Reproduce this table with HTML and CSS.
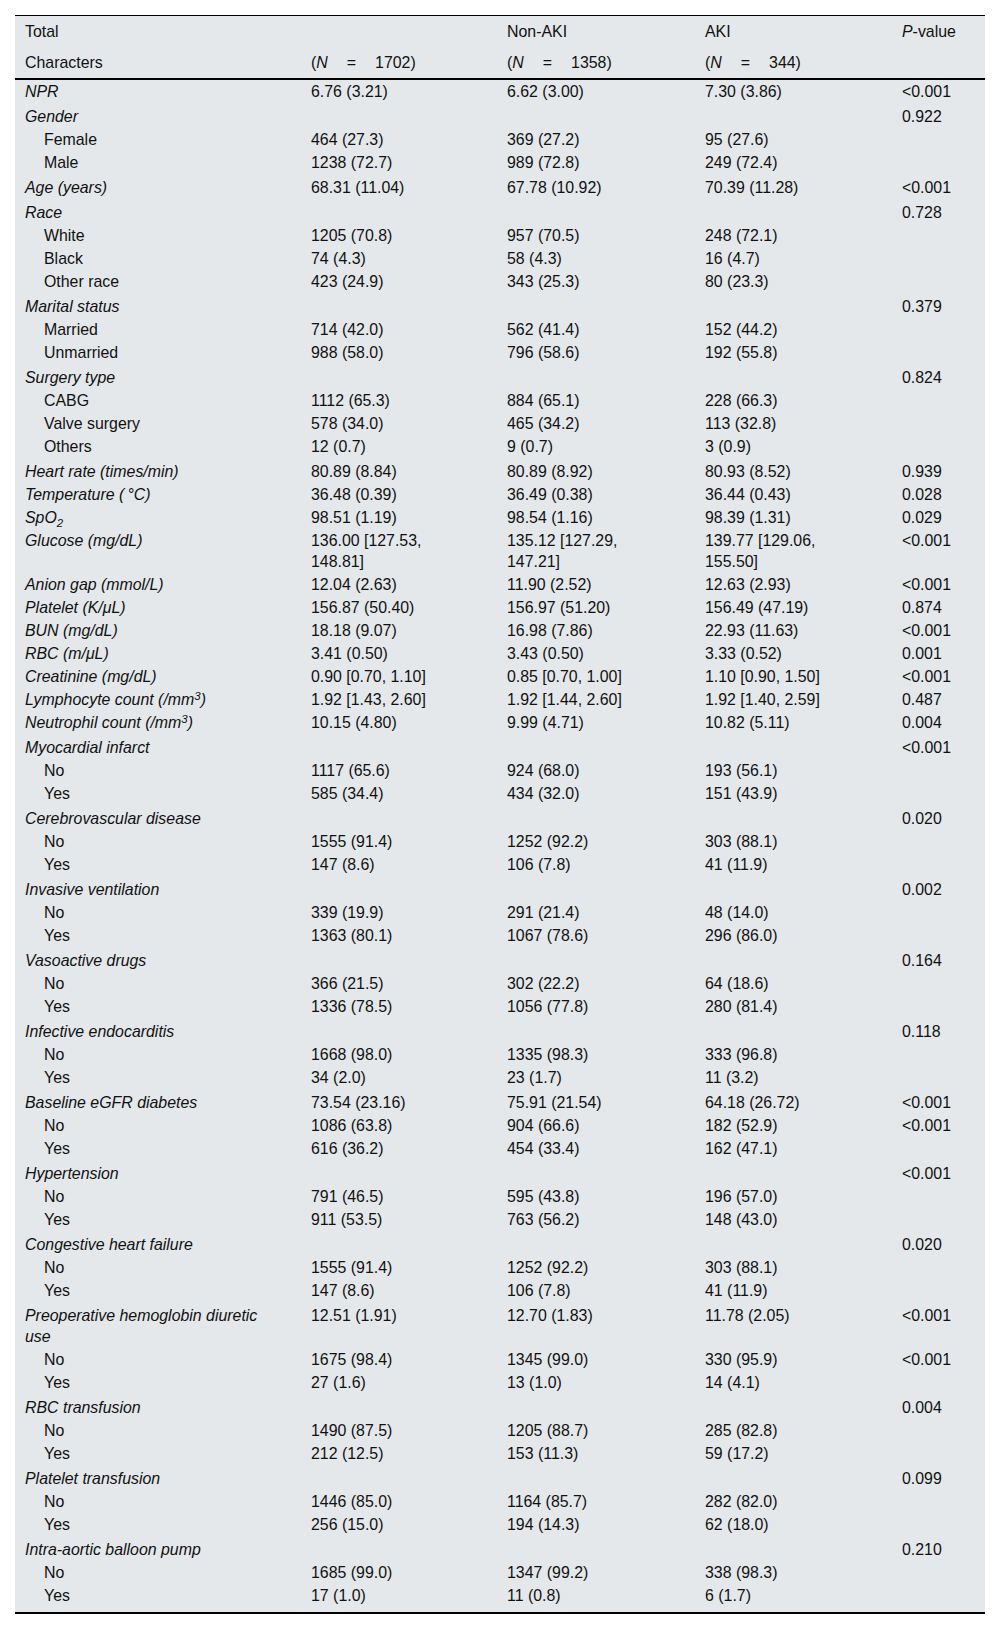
FILE: index.html
```html
<!DOCTYPE html>
<html>
<head>
<meta charset="utf-8">
<link rel="stylesheet" href="styles.css">
</head>
<body>
<div class="wrap">
<table class="data">
<colgroup><col class="c1"><col class="c2"><col class="c3"><col class="c4"><col class="c5"></colgroup>
<thead>
<tr class="h1"><th>Total</th><th></th><th>Non-AKI</th><th>AKI</th><th><i>P</i>-value</th></tr>
<tr class="h2"><th>Characters</th><th>(<i>N</i><span class="eq">=</span>1702)</th><th>(<i>N</i><span class="eq">=</span>1358)</th><th>(<i>N</i><span class="eq">=</span>344)</th><th></th></tr>
</thead>
<tbody>
<tr><td><i>NPR</i></td><td>6.76 (3.21)</td><td>6.62 (3.00)</td><td>7.30 (3.86)</td><td>&lt;0.001</td></tr>
<tr class="sep"><td><i>Gender</i></td><td></td><td></td><td></td><td>0.922</td></tr>
<tr class="sub"><td>Female</td><td>464 (27.3)</td><td>369 (27.2)</td><td>95 (27.6)</td><td></td></tr>
<tr class="sub"><td>Male</td><td>1238 (72.7)</td><td>989 (72.8)</td><td>249 (72.4)</td><td></td></tr>
<tr class="sep"><td><i>Age (years)</i></td><td>68.31 (11.04)</td><td>67.78 (10.92)</td><td>70.39 (11.28)</td><td>&lt;0.001</td></tr>
<tr class="sep"><td><i>Race</i></td><td></td><td></td><td></td><td>0.728</td></tr>
<tr class="sub"><td>White</td><td>1205 (70.8)</td><td>957 (70.5)</td><td>248 (72.1)</td><td></td></tr>
<tr class="sub"><td>Black</td><td>74 (4.3)</td><td>58 (4.3)</td><td>16 (4.7)</td><td></td></tr>
<tr class="sub"><td>Other race</td><td>423 (24.9)</td><td>343 (25.3)</td><td>80 (23.3)</td><td></td></tr>
<tr class="sep"><td><i>Marital status</i></td><td></td><td></td><td></td><td>0.379</td></tr>
<tr class="sub"><td>Married</td><td>714 (42.0)</td><td>562 (41.4)</td><td>152 (44.2)</td><td></td></tr>
<tr class="sub"><td>Unmarried</td><td>988 (58.0)</td><td>796 (58.6)</td><td>192 (55.8)</td><td></td></tr>
<tr class="sep"><td><i>Surgery type</i></td><td></td><td></td><td></td><td>0.824</td></tr>
<tr class="sub"><td>CABG</td><td>1112 (65.3)</td><td>884 (65.1)</td><td>228 (66.3)</td><td></td></tr>
<tr class="sub"><td>Valve surgery</td><td>578 (34.0)</td><td>465 (34.2)</td><td>113 (32.8)</td><td></td></tr>
<tr class="sub"><td>Others</td><td>12 (0.7)</td><td>9 (0.7)</td><td>3 (0.9)</td><td></td></tr>
<tr class="sep"><td><i>Heart rate (times/min)</i></td><td>80.89 (8.84)</td><td>80.89 (8.92)</td><td>80.93 (8.52)</td><td>0.939</td></tr>
<tr><td><i>Temperature (&#8201;°C)</i></td><td>36.48 (0.39)</td><td>36.49 (0.38)</td><td>36.44 (0.43)</td><td>0.028</td></tr>
<tr><td><i>SpO<sub>2</sub></i></td><td>98.51 (1.19)</td><td>98.54 (1.16)</td><td>98.39 (1.31)</td><td>0.029</td></tr>
<tr><td><i>Glucose (mg/dL)</i></td><td>136.00 [127.53, 148.81]</td><td>135.12 [127.29, 147.21]</td><td>139.77 [129.06, 155.50]</td><td>&lt;0.001</td></tr>
<tr><td><i>Anion gap (mmol/L)</i></td><td>12.04 (2.63)</td><td>11.90 (2.52)</td><td>12.63 (2.93)</td><td>&lt;0.001</td></tr>
<tr><td><i>Platelet (K/μL)</i></td><td>156.87 (50.40)</td><td>156.97 (51.20)</td><td>156.49 (47.19)</td><td>0.874</td></tr>
<tr><td><i>BUN (mg/dL)</i></td><td>18.18 (9.07)</td><td>16.98 (7.86)</td><td>22.93 (11.63)</td><td>&lt;0.001</td></tr>
<tr><td><i>RBC (m/μL)</i></td><td>3.41 (0.50)</td><td>3.43 (0.50)</td><td>3.33 (0.52)</td><td>0.001</td></tr>
<tr><td><i>Creatinine (mg/dL)</i></td><td>0.90 [0.70, 1.10]</td><td>0.85 [0.70, 1.00]</td><td>1.10 [0.90, 1.50]</td><td>&lt;0.001</td></tr>
<tr><td><i>Lymphocyte count (/mm<sup>3</sup>)</i></td><td>1.92 [1.43, 2.60]</td><td>1.92 [1.44, 2.60]</td><td>1.92 [1.40, 2.59]</td><td>0.487</td></tr>
<tr><td><i>Neutrophil count (/mm<sup>3</sup>)</i></td><td>10.15 (4.80)</td><td>9.99 (4.71)</td><td>10.82 (5.11)</td><td>0.004</td></tr>
<tr class="sep"><td><i>Myocardial infarct</i></td><td></td><td></td><td></td><td>&lt;0.001</td></tr>
<tr class="sub"><td>No</td><td>1117 (65.6)</td><td>924 (68.0)</td><td>193 (56.1)</td><td></td></tr>
<tr class="sub"><td>Yes</td><td>585 (34.4)</td><td>434 (32.0)</td><td>151 (43.9)</td><td></td></tr>
<tr class="sep"><td><i>Cerebrovascular disease</i></td><td></td><td></td><td></td><td>0.020</td></tr>
<tr class="sub"><td>No</td><td>1555 (91.4)</td><td>1252 (92.2)</td><td>303 (88.1)</td><td></td></tr>
<tr class="sub"><td>Yes</td><td>147 (8.6)</td><td>106 (7.8)</td><td>41 (11.9)</td><td></td></tr>
<tr class="sep"><td><i>Invasive ventilation</i></td><td></td><td></td><td></td><td>0.002</td></tr>
<tr class="sub"><td>No</td><td>339 (19.9)</td><td>291 (21.4)</td><td>48 (14.0)</td><td></td></tr>
<tr class="sub"><td>Yes</td><td>1363 (80.1)</td><td>1067 (78.6)</td><td>296 (86.0)</td><td></td></tr>
<tr class="sep"><td><i>Vasoactive drugs</i></td><td></td><td></td><td></td><td>0.164</td></tr>
<tr class="sub"><td>No</td><td>366 (21.5)</td><td>302 (22.2)</td><td>64 (18.6)</td><td></td></tr>
<tr class="sub"><td>Yes</td><td>1336 (78.5)</td><td>1056 (77.8)</td><td>280 (81.4)</td><td></td></tr>
<tr class="sep"><td><i>Infective endocarditis</i></td><td></td><td></td><td></td><td>0.118</td></tr>
<tr class="sub"><td>No</td><td>1668 (98.0)</td><td>1335 (98.3)</td><td>333 (96.8)</td><td></td></tr>
<tr class="sub"><td>Yes</td><td>34 (2.0)</td><td>23 (1.7)</td><td>11 (3.2)</td><td></td></tr>
<tr class="sep"><td><i>Baseline eGFR diabetes</i></td><td>73.54 (23.16)</td><td>75.91 (21.54)</td><td>64.18 (26.72)</td><td>&lt;0.001</td></tr>
<tr class="sub"><td>No</td><td>1086 (63.8)</td><td>904 (66.6)</td><td>182 (52.9)</td><td>&lt;0.001</td></tr>
<tr class="sub"><td>Yes</td><td>616 (36.2)</td><td>454 (33.4)</td><td>162 (47.1)</td><td></td></tr>
<tr class="sep"><td><i>Hypertension</i></td><td></td><td></td><td></td><td>&lt;0.001</td></tr>
<tr class="sub"><td>No</td><td>791 (46.5)</td><td>595 (43.8)</td><td>196 (57.0)</td><td></td></tr>
<tr class="sub"><td>Yes</td><td>911 (53.5)</td><td>763 (56.2)</td><td>148 (43.0)</td><td></td></tr>
<tr class="sep"><td><i>Congestive heart failure</i></td><td></td><td></td><td></td><td>0.020</td></tr>
<tr class="sub"><td>No</td><td>1555 (91.4)</td><td>1252 (92.2)</td><td>303 (88.1)</td><td></td></tr>
<tr class="sub"><td>Yes</td><td>147 (8.6)</td><td>106 (7.8)</td><td>41 (11.9)</td><td></td></tr>
<tr class="sep"><td><i>Preoperative hemoglobin diuretic use</i></td><td>12.51 (1.91)</td><td>12.70 (1.83)</td><td>11.78 (2.05)</td><td>&lt;0.001</td></tr>
<tr class="sub"><td>No</td><td>1675 (98.4)</td><td>1345 (99.0)</td><td>330 (95.9)</td><td>&lt;0.001</td></tr>
<tr class="sub"><td>Yes</td><td>27 (1.6)</td><td>13 (1.0)</td><td>14 (4.1)</td><td></td></tr>
<tr class="sep"><td><i>RBC transfusion</i></td><td></td><td></td><td></td><td>0.004</td></tr>
<tr class="sub"><td>No</td><td>1490 (87.5)</td><td>1205 (88.7)</td><td>285 (82.8)</td><td></td></tr>
<tr class="sub"><td>Yes</td><td>212 (12.5)</td><td>153 (11.3)</td><td>59 (17.2)</td><td></td></tr>
<tr class="sep"><td><i>Platelet transfusion</i></td><td></td><td></td><td></td><td>0.099</td></tr>
<tr class="sub"><td>No</td><td>1446 (85.0)</td><td>1164 (85.7)</td><td>282 (82.0)</td><td></td></tr>
<tr class="sub"><td>Yes</td><td>256 (15.0)</td><td>194 (14.3)</td><td>62 (18.0)</td><td></td></tr>
<tr class="sep"><td><i>Intra-aortic balloon pump</i></td><td></td><td></td><td></td><td>0.210</td></tr>
<tr class="sub"><td>No</td><td>1685 (99.0)</td><td>1347 (99.2)</td><td>338 (98.3)</td><td></td></tr>
<tr class="sub last"><td>Yes</td><td>17 (1.0)</td><td>11 (0.8)</td><td>6 (1.7)</td><td></td></tr>
</tbody>
</table>
</div>
</body>
</html>
```
FILE: styles.css
```css
html, body {
  margin: 0;
  padding: 0;
  background: #ffffff;
}
.wrap {
  padding: 15px 15px 0 15px;
}
.data {
  width: 970px;
  table-layout: fixed;
  border-collapse: separate;
  border-spacing: 0;
  background: #e4e8eb;
  border-top: 1px solid #000;
  border-bottom: 2px solid #000;
  font-family: "Liberation Sans", Arial, sans-serif;
  font-size: 15.9px;
  line-height: 21px;
  color: #111;
}
.c1 { width: 286px; }
.c2 { width: 196px; }
.c3 { width: 198px; }
.c4 { width: 197px; }
.c5 { width: 93px; }
.data th {
  font-weight: normal;
  text-align: left;
  vertical-align: top;
  padding: 5px 30px 5px 10px;
}
.data .h2 th {
  border-bottom: 2px solid #000;
}
.data td {
  text-align: left;
  vertical-align: top;
  padding: 1px 30px 1px 10px;
}
.data th:last-child,
.data td:last-child {
  padding-right: 6px;
}
.data tr.sep td {
  padding-top: 3px;
}
.data tr.sub td:first-child {
  padding-left: 29px;
}
.data tr.last td {
  padding-bottom: 6px;
}
.eq {
  margin: 0 19px;
}
sub, sup {
  font-size: 0.72em;
  line-height: 0;
}
sub { vertical-align: -0.35em; }
sup { vertical-align: 0.45em; }
```
